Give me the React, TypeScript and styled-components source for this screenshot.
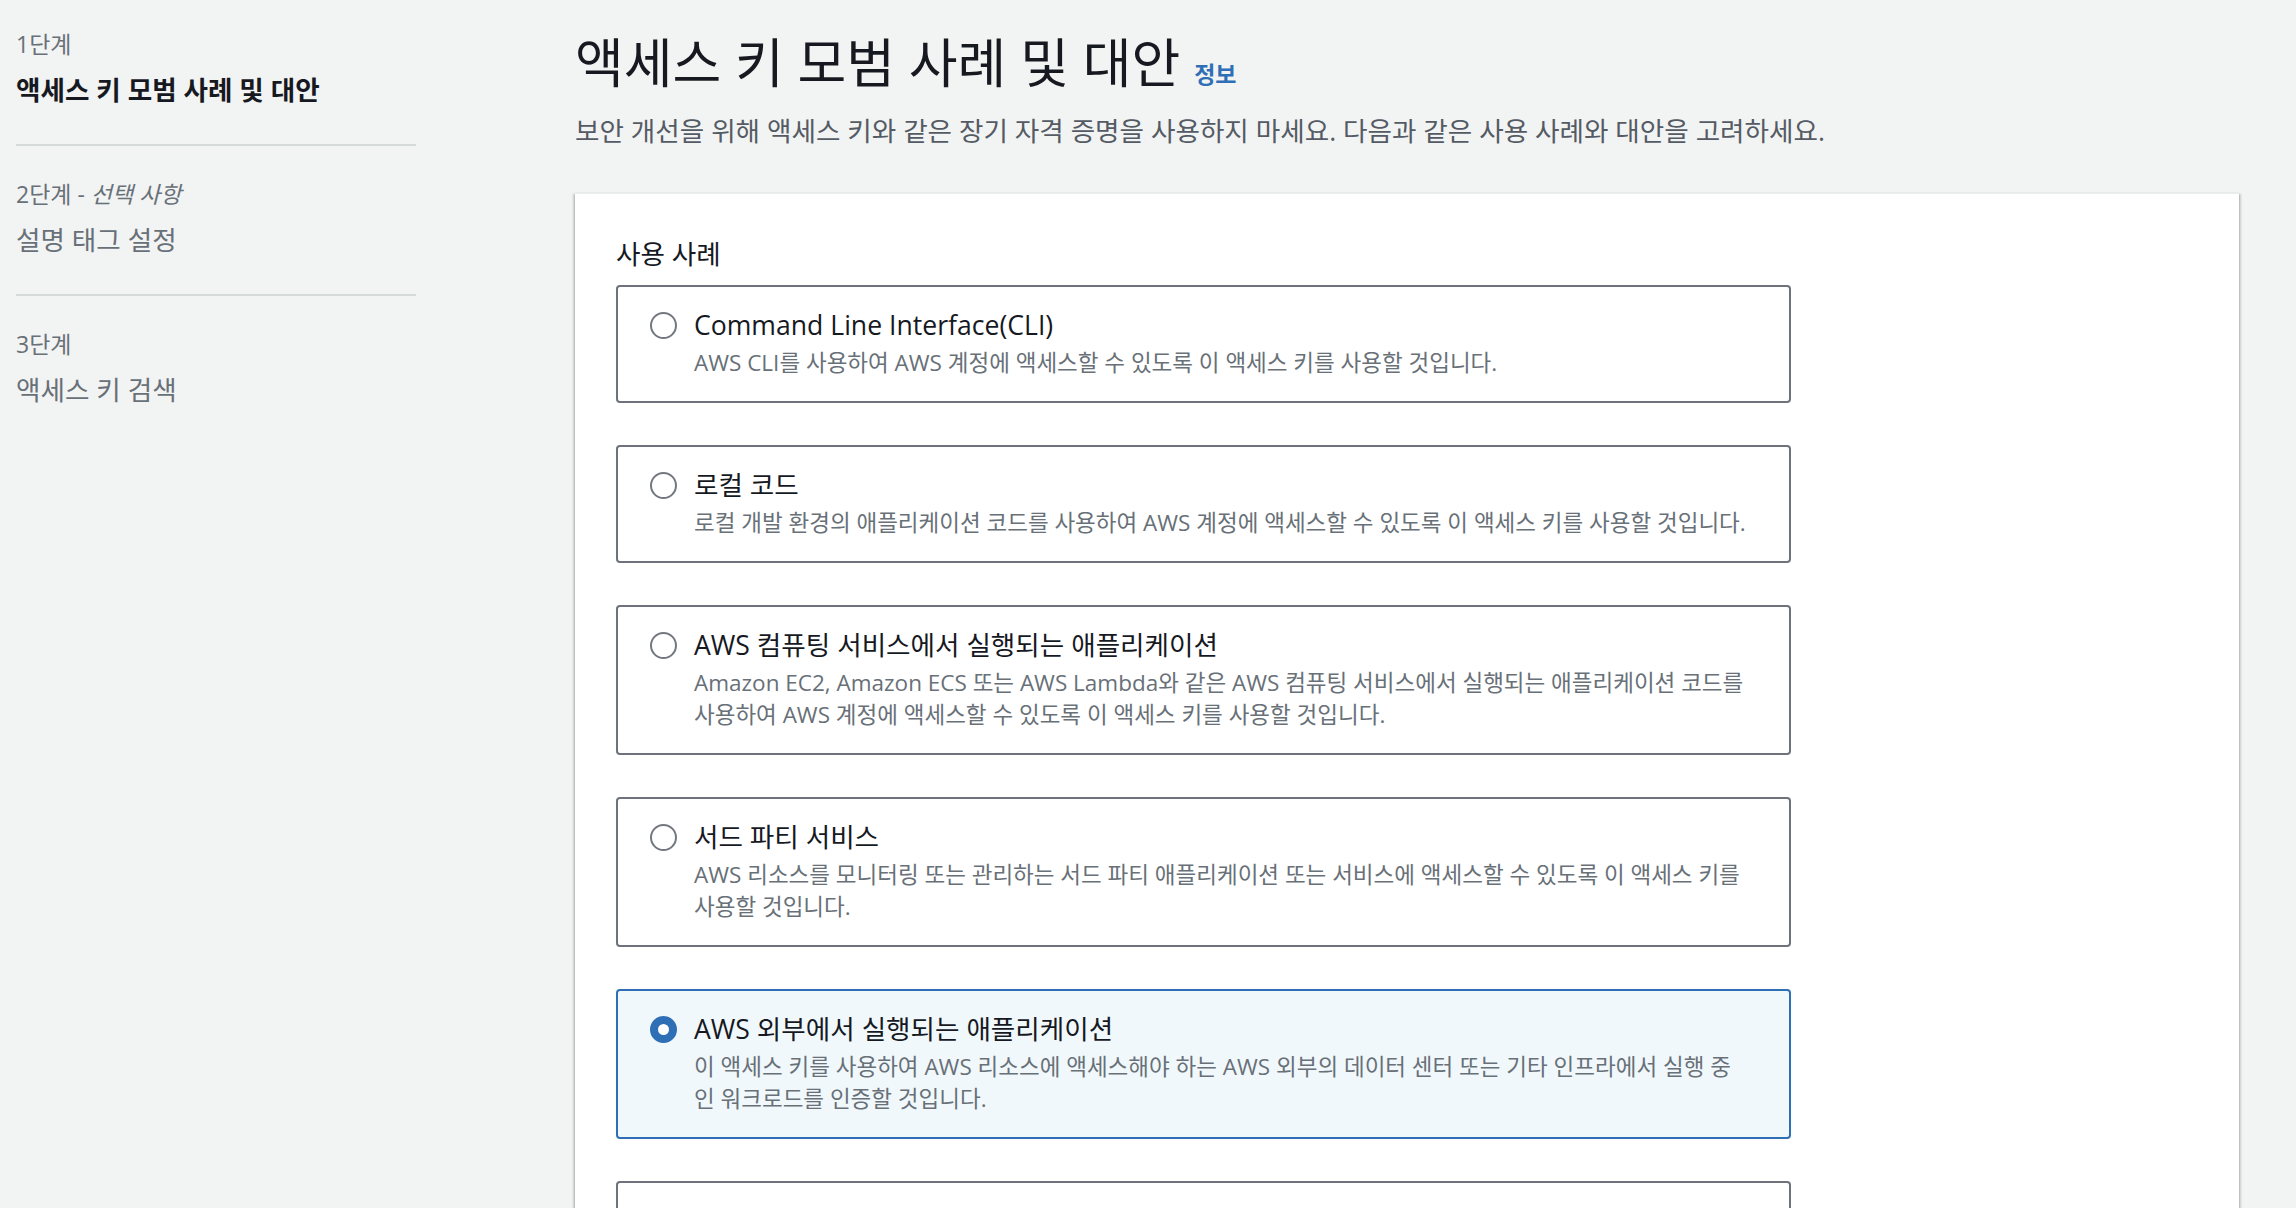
import React from "react";
import styled, { createGlobalStyle } from "styled-components";

const Global = createGlobalStyle`
  html, body { margin: 0; padding: 0; background: #f2f3f3; }
  body {
    font-family: "Open Sans", "Noto Sans CJK KR", sans-serif;
    color: #16191f;
    -webkit-font-smoothing: antialiased;
  }
  * { box-sizing: border-box; }
`;

const Page = styled.div`
  display: grid;
  grid-template-columns: 400px 1664px;
  column-gap: 159px;
  padding-left: 16px;
  height: 1208px;
  overflow: hidden;
`;

const Steps = styled.nav`
  display: flex;
  flex-direction: column;
  padding-top: 30px;
`;

const Step = styled.div<{ $last?: boolean }>`
  display: flex;
  flex-direction: column;
  gap: 16px;
  padding-bottom: 38px;
  border-bottom: ${(p) => (p.$last ? "none" : "2px solid #d5dbdb")};
  & + & {
    padding-top: 34px;
  }
`;

const StepLabel = styled.div`
  font-size: 23px;
  line-height: 28px;
  color: #687078;
  em {
    font-style: italic;
  }
`;

const StepTitle = styled.div<{ $active?: boolean }>`
  font-size: 26.6px;
  line-height: 32px;
  font-weight: ${(p) => (p.$active ? 700 : 400)};
  color: ${(p) => (p.$active ? "#16191f" : "#687078")};
`;

const Main = styled.main`
  display: flex;
  flex-direction: column;
  padding-top: 33px;
`;

const Title = styled.h1`
  margin: 0;
  font-size: 53px;
  line-height: 60px;
  font-weight: 400;
  color: #16191f;
`;

const Info = styled.a`
  margin-left: 14px;
  font-size: 23px;
  line-height: 1;
  font-weight: 700;
  color: #2f6fb5;
  text-decoration: none;
`;

const Lead = styled.p`
  margin: 22px 0 0;
  font-size: 26.6px;
  line-height: 32px;
  color: #545b64;
`;

const Panel = styled.section`
  margin-top: 46px;
  background: #ffffff;
  border-top: 1px solid #eaeded;
  box-shadow: 0 1px 2px rgba(0, 28, 36, 0.3), 2px 1px 2px rgba(0, 28, 36, 0.15),
    -2px 1px 2px rgba(0, 28, 36, 0.15);
  padding: 44px 41px 80px;
  flex: 1;
`;

const FieldLabel = styled.div`
  font-size: 26.6px;
  line-height: 32px;
  color: #16191f;
  margin-bottom: 15px;
`;

const TileList = styled.div`
  display: flex;
  flex-direction: column;
  gap: 42px;
  width: 1175px;
`;

const Tile = styled.label<{ $selected?: boolean }>`
  display: flex;
  gap: 17px;
  padding: 22px 42px 22px 32px;
  border: 2px solid ${(p) => (p.$selected ? "#2f6fb5" : "#6e737b")};
  border-radius: 4px;
  background: ${(p) => (p.$selected ? "#f1f8fc" : "#ffffff")};
  cursor: pointer;
`;

const RadioSlot = styled.span`
  display: flex;
  align-items: center;
  height: 32px;
  flex-shrink: 0;
`;

const Radio = styled.span<{ $checked?: boolean }>`
  display: block;
  width: 27px;
  height: 27px;
  border-radius: 50%;
  background: #ffffff;
  border: ${(p) => (p.$checked ? "8px solid #2f6fb5" : "2px solid #737880")};
`;

const TileText = styled.span`
  display: flex;
  flex-direction: column;
  gap: 6px;
  min-width: 0;
`;

const TileTitle = styled.span`
  font-size: 26.6px;
  line-height: 32px;
  color: #16191f;
`;

const TileDesc = styled.span`
  font-size: 22.5px;
  line-height: 32px;
  color: #687078;
`;

type Option = { title: string; desc: string; selected?: boolean };

const options: Option[] = [
  {
    title: "Command Line Interface(CLI)",
    desc: "AWS CLI를 사용하여 AWS 계정에 액세스할 수 있도록 이 액세스 키를 사용할 것입니다.",
  },
  {
    title: "로컬 코드",
    desc: "로컬 개발 환경의 애플리케이션 코드를 사용하여 AWS 계정에 액세스할 수 있도록 이 액세스 키를 사용할 것입니다.",
  },
  {
    title: "AWS 컴퓨팅 서비스에서 실행되는 애플리케이션",
    desc: "Amazon EC2, Amazon ECS 또는 AWS Lambda와 같은 AWS 컴퓨팅 서비스에서 실행되는 애플리케이션 코드를 사용하여 AWS 계정에 액세스할 수 있도록 이 액세스 키를 사용할 것입니다.",
  },
  {
    title: "서드 파티 서비스",
    desc: "AWS 리소스를 모니터링 또는 관리하는 서드 파티 애플리케이션 또는 서비스에 액세스할 수 있도록 이 액세스 키를 사용할 것입니다.",
  },
  {
    title: "AWS 외부에서 실행되는 애플리케이션",
    desc: "이 액세스 키를 사용하여 AWS 리소스에 액세스해야 하는 AWS 외부의 데이터 센터 또는 기타 인프라에서 실행 중인 워크로드를 인증할 것입니다.",
    selected: true,
  },
  {
    title: "기타",
    desc: "사용 사례가 여기에 나열되지 않았습니다.",
  },
];

export default function App() {
  return (
    <>
      <Global />
      <Page>
        <Steps>
          <Step>
            <StepLabel>1단계</StepLabel>
            <StepTitle $active>액세스 키 모범 사례 및 대안</StepTitle>
          </Step>
          <Step>
            <StepLabel>
              2단계 - <em>선택 사항</em>
            </StepLabel>
            <StepTitle>설명 태그 설정</StepTitle>
          </Step>
          <Step $last>
            <StepLabel>3단계</StepLabel>
            <StepTitle>액세스 키 검색</StepTitle>
          </Step>
        </Steps>
        <Main>
          <Title>
            액세스 키 모범 사례 및 대안
            <Info href="#">정보</Info>
          </Title>
          <Lead>
            보안 개선을 위해 액세스 키와 같은 장기 자격 증명을 사용하지 마세요. 다음과 같은 사용 사례와 대안을 고려하세요.
          </Lead>
          <Panel>
            <FieldLabel>사용 사례</FieldLabel>
            <TileList>
              {options.map((o, i) => (
                <Tile key={i} $selected={o.selected}>
                  <RadioSlot>
                    <Radio $checked={o.selected} />
                  </RadioSlot>
                  <TileText>
                    <TileTitle>{o.title}</TileTitle>
                    <TileDesc>{o.desc}</TileDesc>
                  </TileText>
                </Tile>
              ))}
            </TileList>
          </Panel>
        </Main>
      </Page>
    </>
  );
}
